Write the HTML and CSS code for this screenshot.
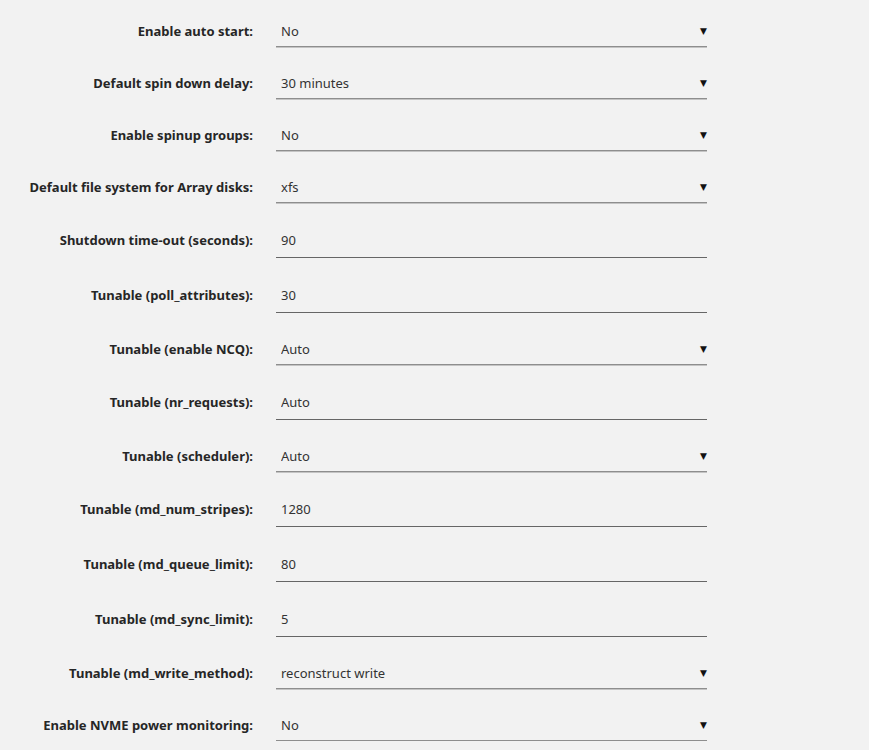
FILE: index.html
```html
<!DOCTYPE html>
<html lang="en">
<head>
  <meta charset="UTF-8" />
  <title>Disk Settings</title>
  <link rel="stylesheet" href="styles.css">
</head>
<body>
  <!-- Disk settings form -->
  <form class="settings">
    <label class="label" for="autostart">Enable auto start:</label>
    <div class="pick">
      <select id="autostart"><option>No</option><option>Yes</option></select>
      <span class="arrow">&#9660;</span>
    </div>

    <label class="label" for="spindown">Default spin down delay:</label>
    <div class="pick">
      <select id="spindown"><option>30 minutes</option></select>
      <span class="arrow">&#9660;</span>
    </div>

    <label class="label" for="spinup">Enable spinup groups:</label>
    <div class="pick">
      <select id="spinup"><option>No</option><option>Yes</option></select>
      <span class="arrow">&#9660;</span>
    </div>

    <label class="label" for="fstype">Default file system for Array disks:</label>
    <div class="pick">
      <select id="fstype"><option>xfs</option><option>btrfs</option></select>
      <span class="arrow">&#9660;</span>
    </div>

    <label class="label label-field" for="shutdown">Shutdown time-out (seconds):</label>
    <input class="field" id="shutdown" type="text" value="90">

    <label class="label label-field" for="poll">Tunable (poll_attributes):</label>
    <input class="field" id="poll" type="text" value="30">

    <label class="label" for="ncq">Tunable (enable NCQ):</label>
    <div class="pick">
      <select id="ncq"><option>Auto</option></select>
      <span class="arrow">&#9660;</span>
    </div>

    <label class="label label-field" for="nrreq">Tunable (nr_requests):</label>
    <input class="field" id="nrreq" type="text" value="Auto">

    <label class="label" for="sched">Tunable (scheduler):</label>
    <div class="pick">
      <select id="sched"><option>Auto</option></select>
      <span class="arrow">&#9660;</span>
    </div>

    <label class="label label-field" for="stripes">Tunable (md_num_stripes):</label>
    <input class="field" id="stripes" type="text" value="1280">

    <label class="label label-field" for="queue">Tunable (md_queue_limit):</label>
    <input class="field" id="queue" type="text" value="80">

    <label class="label label-field" for="sync">Tunable (md_sync_limit):</label>
    <input class="field" id="sync" type="text" value="5">

    <label class="label" for="write">Tunable (md_write_method):</label>
    <div class="pick">
      <select id="write"><option>reconstruct write</option></select>
      <span class="arrow">&#9660;</span>
    </div>

    <label class="label" for="nvme">Enable NVME power monitoring:</label>
    <div class="pick">
      <select id="nvme"><option>No</option><option>Yes</option></select>
      <span class="arrow">&#9660;</span>
    </div>
  </form>
</body>
</html>
```

FILE: styles.css
```css
body {
  margin: 0;
  background-color: #f2f2f2;
  font-family: "Noto Sans", "DejaVu Sans", sans-serif;
  color: #333;
}
.settings {
  display: grid;
  grid-template-columns: 253px 431px;
  column-gap: 23px;
  row-gap: 22px;
  padding-top: 17px;
}
.label {
  text-align: right;
  font-size: 13px;
  font-weight: bold;
  line-height: 18px;
  padding-top: 5px;
  color: #262626;
}
.label-field {
  padding-top: 6px;
}
.pick {
  position: relative;
}
.pick select,
.field {
  appearance: none;
  -webkit-appearance: none;
  display: block;
  width: 100%;
  box-sizing: border-box;
  margin: 0;
  border: none;
  border-radius: 0;
  background: transparent;
  font-family: inherit;
  font-size: 13px;
  line-height: 18px;
  color: #333;
  padding: 5px 5px 6px;
  outline: none;
}
.pick select {
  height: 30px;
  border-bottom: 1px solid #8e8e8e;
  box-shadow: 0 1px 0 #c4c4c4;
}
.field {
  height: 33px;
  padding-top: 6px;
  padding-bottom: 8px;
  border-bottom: 1px solid #666;
}
.arrow {
  position: absolute;
  right: 0;
  top: 7px;
  font-size: 9px;
  color: #111;
  pointer-events: none;
}
```
